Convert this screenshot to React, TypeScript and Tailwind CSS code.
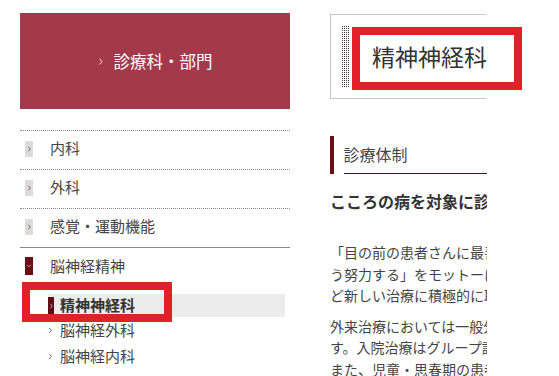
import React from "react";

const FONT = "font-['Meiryo','Noto_Sans_CJK_JP','Noto_Sans',sans-serif]";

function Chevron({ className = "", down = false }: { className?: string; down?: boolean }) {
  return (
    <svg viewBox="0 0 6 8" className={className} fill="none" stroke="currentColor" strokeWidth="1">
      {down ? <path d="M0.5 2.5 L3 5 L5.5 2.5" /> : <path d="M1.5 1 L4 4 L1.5 7" />}
    </svg>
  );
}

const topItems = ["内科", "外科", "感覚・運動機能"];

function SideMenu() {
  return (
    <aside className="w-[270px] shrink-0">
      <div className="flex h-[96px] items-center justify-center bg-[#a3394b] text-[16.5px] text-white">
        <Chevron className="mr-[10px] h-[9px] w-[6px] text-[#f3d9de]" />
        <span>診療科・部門</span>
      </div>

      <ul className="mt-[21px] border-t border-dotted border-[#8a8a8a] text-[15px] text-[#444]">
        {topItems.map((t, i) => (
          <li
            key={t}
            className={
              "flex h-[39px] items-center pb-[3px] " +
              (i === topItems.length - 1
                ? "border-b border-solid border-[#888]"
                : "border-b border-dotted border-[#8a8a8a]")
            }
          >
            <span className="ml-[5px] flex h-[16px] w-[8px] items-center justify-center bg-[#dcdcdc] text-[#7a1f2a]">
              <Chevron className="h-[6px] w-[5px]" />
            </span>
            <span className="ml-[17px]">{t}</span>
          </li>
        ))}
        <li>
          <div className="flex h-[36px] items-center">
            <span className="ml-[5px] flex h-[18px] w-[8px] items-center justify-center bg-[#6b0e16] text-[#e9c6cb]">
              <Chevron down className="h-[6px] w-[6px]" />
            </span>
            <span className="ml-[17px]">脳神経精神</span>
          </div>
          <ul className="mt-[10px] pl-[28px] text-[15px]">
            <li className="mr-[5px] flex h-[23px] items-center bg-[#ececec]">
              <span className="flex h-[18px] w-[6px] items-center justify-center bg-[#5c0c14] text-[#f0d0d5]">
                <Chevron className="h-[6px] w-[5px]" />
              </span>
              <span className="ml-[6px] font-bold text-[#333]">精神神経科</span>
            </li>
            <li className="flex h-[26px] items-center">
              <Chevron className="h-[7px] w-[5px] text-[#555]" />
              <span className="ml-[7px]">脳神経外科</span>
            </li>
            <li className="flex h-[26px] items-center">
              <Chevron className="h-[7px] w-[5px] text-[#555]" />
              <span className="ml-[7px]">脳神経内科</span>
            </li>
          </ul>
        </li>
      </ul>
    </aside>
  );
}

function Content() {
  return (
    <section className="w-[157px] shrink-0 overflow-hidden text-[#333]">
      <div className="mt-[1px] flex h-[85px] w-[220px] items-center border border-[#c8c8c8]">
        <div className="ml-[10px] h-[63px] w-[9px] bg-[linear-gradient(90deg,#fff_50%,transparent_50%),linear-gradient(#fff_50%,#4a2e30_50%)] bg-[length:2px_2px]" />
        <h1 className="ml-[22px] whitespace-nowrap text-[23px] leading-none text-[#333]">精神神経科</h1>
      </div>

      <div className="mt-[37px] flex h-[38px]">
        <div className="w-[5px] bg-[#6b0e16]" />
        <h2 className="ml-[10px] flex w-[200px] items-center whitespace-nowrap border-b border-[#3a1c1e] pb-[2px] text-[16px] text-[#444]">
          診療体制
        </h2>
      </div>

      <p className="mt-[17px] whitespace-nowrap text-[16px] font-bold leading-[20px] text-[#333]">
        こころの病を対象に診療を行っています
      </p>

      <div className="mt-[31px] whitespace-nowrap text-[14px] leading-[21.5px] text-[#444]">
        <p>
          「目の前の患者さんに最善の医療を提供できるよ
          <br />
          う努力する」をモットーに、修正型電気けいれん療法な
          <br />
          ど新しい治療に積極的に取り組んでいます。
        </p>
        <p className="mt-[9px]">
          外来治療においては一般外来のほか専門外来を設けていま
          <br />
          す。入院治療はグループ診療体制をとっています。
          <br />
          また、児童・思春期の患者さんにも対応しています。
        </p>
      </div>
    </section>
  );
}

export default function App() {
  return (
    <main className={`relative h-[376px] w-[559px] overflow-hidden bg-white ${FONT}`}>
      <div className="flex gap-[40px] pl-[20px] pt-[13px]">
        <SideMenu />
        <Content />
      </div>
      {/* annotation boxes */}
      <div className="pointer-events-none absolute left-[352px] top-[27px] h-[63px] w-[170px] border-[8px] border-[#e3202a]" />
      <div className="pointer-events-none absolute left-[22px] top-[282px] h-[40px] w-[150px] border-[8px] border-[#e3202a]" />
    </main>
  );
}
